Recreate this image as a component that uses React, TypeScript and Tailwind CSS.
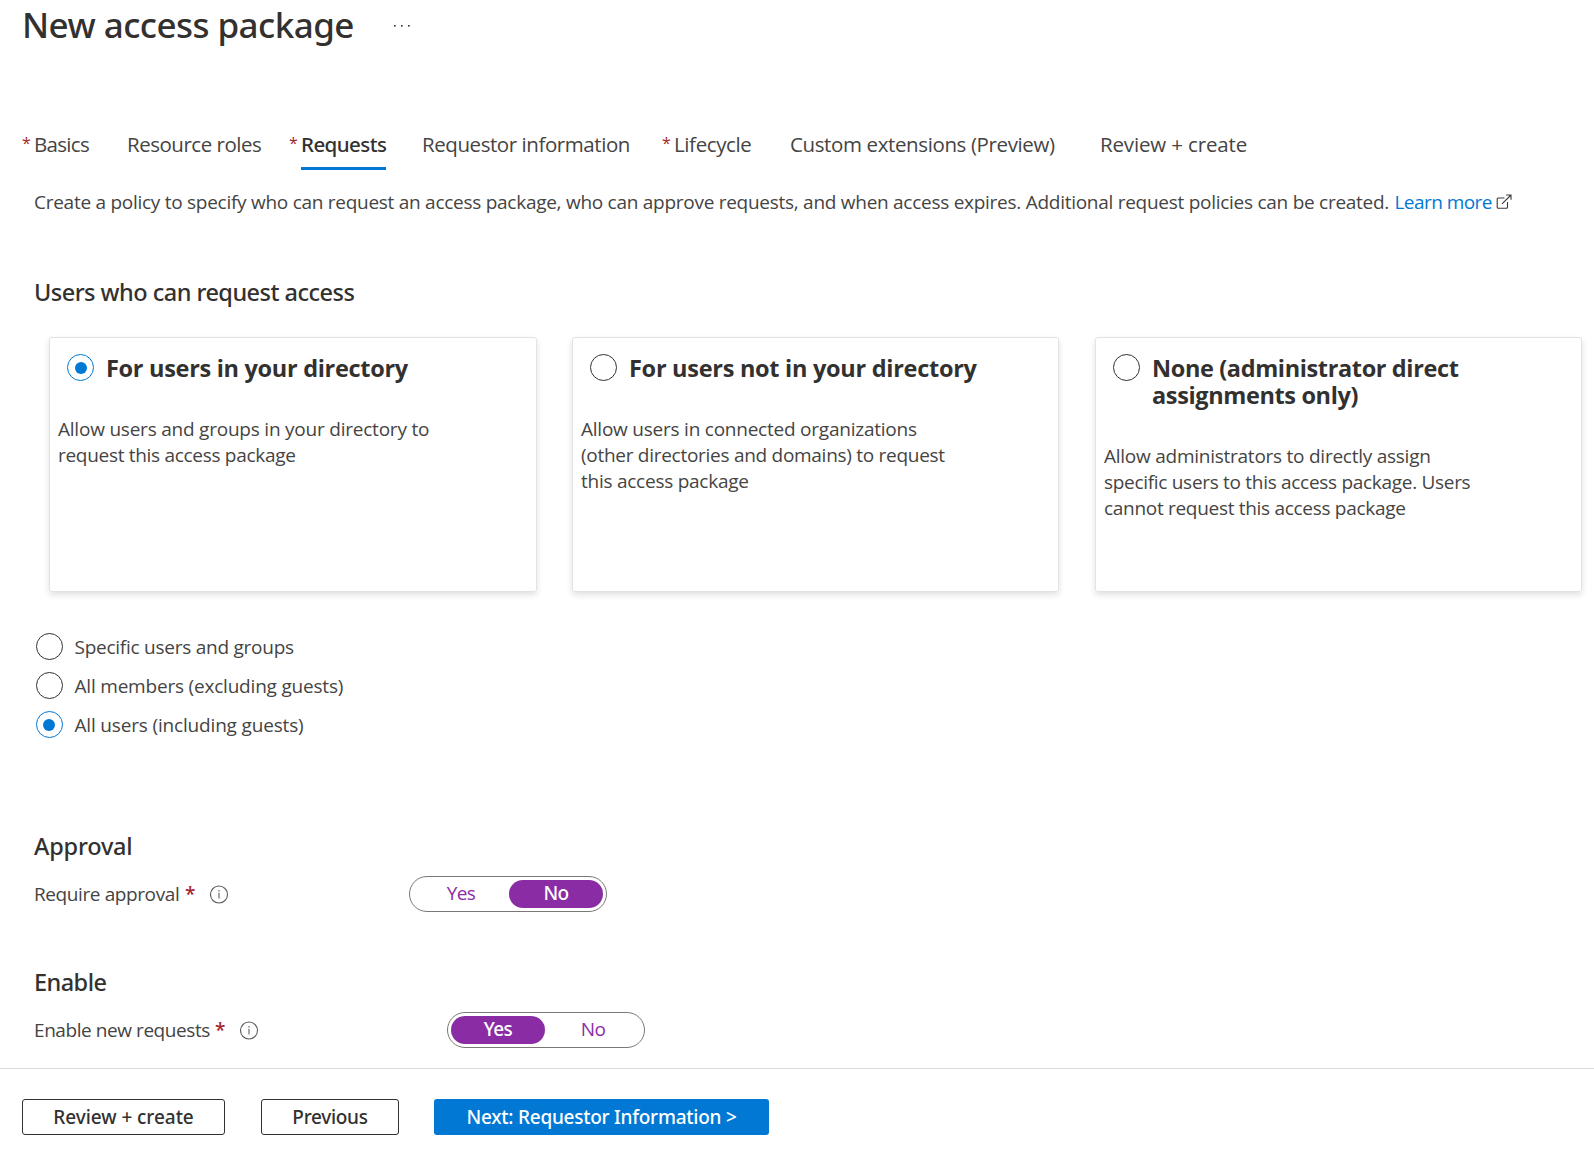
import { useState } from "react";

type Tab = { label: string; required?: boolean; active?: boolean; box: string; text: string };

const tabs: Tab[] = [
  { label: "Basics", required: true, box: "w-[105px]", text: "tracking-[-0.7px]" },
  { label: "Resource roles", box: "w-[162px]", text: "tracking-[-0.48px]" },
  { label: "Requests", required: true, active: true, box: "w-[133px]", text: "tracking-[-0.55px]" },
  { label: "Requestor information", box: "w-[240px]", text: "tracking-[-0.43px]" },
  { label: "Lifecycle", required: true, box: "w-[128px]", text: "tracking-[-0.38px]" },
  { label: "Custom extensions (Preview)", box: "w-[310px]", text: "tracking-[-0.38px]" },
  { label: "Review + create", box: "w-[160px]", text: "tracking-[-0.15px]" },
];

const cards = [
  {
    title: ["For users in your directory"],
    titleClass: "tracking-[-0.3px]",
    box: "w-[488px]",
    lines: [
      { t: "Allow users and groups in your directory to", c: "tracking-[-0.22px]" },
      { t: "request this access package", c: "tracking-[-0.3px]" },
    ],
  },
  {
    title: ["For users not in your directory"],
    titleClass: "tracking-[-0.28px]",
    box: "ml-[35px] w-[487px]",
    lines: [
      { t: "Allow users in connected organizations", c: "tracking-[-0.23px]" },
      { t: "(other directories and domains) to request", c: "tracking-[-0.28px]" },
      { t: "this access package", c: "tracking-[-0.25px]" },
    ],
  },
  {
    title: ["None (administrator direct", "assignments only)"],
    titleClass: "tracking-[-0.37px]",
    box: "ml-9 w-[487px]",
    lines: [
      { t: "Allow administrators to directly assign", c: "tracking-[-0.25px]" },
      { t: "specific users to this access package. Users", c: "tracking-[-0.3px]" },
      { t: "cannot request this access package", c: "tracking-[-0.3px]" },
    ],
  },
];

const scopes = [
  { t: "Specific users and groups", c: "tracking-[-0.25px]" },
  { t: "All members (excluding guests)", c: "tracking-[-0.2px]" },
  { t: "All users (including guests)", c: "tracking-[-0.17px]" },
];

type RadioProps = { checked: boolean; onSelect: () => void; label: string; dot: string };

function Radio({ checked, onSelect, label, dot }: RadioProps) {
  return (
    <button
      type="button"
      role="radio"
      aria-checked={checked}
      aria-label={label}
      onClick={onSelect}
      className={
        checked
          ? "flex size-[27px] shrink-0 items-center justify-center rounded-full border border-[#0078d4]"
          : "flex size-[27px] shrink-0 items-center justify-center rounded-full border border-[#323130]"
      }
    >
      {checked && <span className={`size-3 rounded-full bg-[#0078d4] ${dot}`} />}
    </button>
  );
}

function InfoIcon() {
  return (
    <svg width="19" height="19" viewBox="0 0 19 19" fill="none" stroke="#605e5c" strokeWidth="1.1">
      <circle cx="9" cy="9.5" r="8.5" />
      <path d="M9 7.8v5.8M9 5v1.4" />
    </svg>
  );
}

function Toggle({ value, onChange }: { value: string; onChange: (v: string) => void }) {
  return (
    <div className="flex h-9 w-[198px] rounded-full border border-[#7a7876] p-[3px]">
      {["Yes", "No"].map((o) => (
        <button
          key={o}
          type="button"
          onClick={() => onChange(o)}
          className={
            value === o
              ? "h-7 w-[94px] rounded-full bg-[#8a2da5] pb-px font-['Noto_Sans'] text-[19px] leading-[25px] font-medium tracking-[-0.6px] text-white"
              : "h-7 flex-1 rounded-full pb-px text-[19px] leading-[25px] tracking-[-0.6px] text-[#8a2da5]"
          }
        >
          {o}
        </button>
      ))}
    </div>
  );
}

export default function App() {
  const [card, setCard] = useState(0);
  const [scope, setScope] = useState(2);
  const [approval, setApproval] = useState("No");
  const [enabled, setEnabled] = useState("Yes");

  return (
    <div className="flex h-[1149px] w-[1594px] flex-col overflow-hidden bg-white font-['Open_Sans',sans-serif] text-[19px] text-[#454443]">
      <header className="flex h-12 items-center pl-[22px]">
        <h1 className="w-[371px] pt-0.5 font-['Noto_Sans'] text-[35px] leading-12 font-medium tracking-[-0.55px] whitespace-nowrap text-[#323130]">
          New access package
        </h1>
        <svg width="18" height="4" viewBox="0 0 18 4" fill="#323130" className="mt-[3px]">
          <rect x="1" y="1" width="1.6" height="1.6" />
          <rect x="8" y="1" width="1.6" height="1.6" />
          <rect x="15" y="1" width="1.6" height="1.6" />
        </svg>
      </header>

      <nav className="mt-20 flex h-[42px] pl-[22px] text-[20.5px] leading-8 whitespace-nowrap">
        {tabs.map((t) => (
          <div key={t.label} className={`flex ${t.box}`}>
            {t.required && <span className="w-3 text-[16px] leading-[30px] text-[#a4262c]">*</span>}
            <div
              className={
                t.active
                  ? "h-[42px] w-[85px] border-b-3 border-[#0078d4] font-['Noto_Sans'] font-medium text-[#323130]"
                  : ""
              }
            >
              <span className={t.text}>{t.label}</span>
            </div>
          </div>
        ))}
      </nav>

      <p className="mt-[18px] flex h-7 items-center pl-[34px] leading-7 whitespace-nowrap">
        <span className="w-[1360.5px] tracking-[-0.27px]">
          Create a policy to specify who can request an access package, who can approve requests, and when access
          expires. Additional request policies can be created.
        </span>
        <a className="w-[101.5px] tracking-[-0.55px] text-[#0078d4]">Learn more</a>
        <svg width="16" height="16" viewBox="0 0 16 16" fill="none" stroke="#3b3a39" strokeWidth="1.1">
          <path d="M8.5 4H2.2a1 1 0 0 0-1 1v8.3a1 1 0 0 0 1 1h8.3a1 1 0 0 0 1-1V8" />
          <path d="M6 9.8 15 1M10.2 1H15v4.8" />
        </svg>
      </p>

      <h2 className="mt-15 pl-[34px] font-['Noto_Sans'] text-[23.5px] leading-8 font-medium tracking-[-0.52px] text-[#323130]">
        Users who can request access
      </h2>

      <div className="mt-[29px] flex pl-[49px]">
        {cards.map((c, i) => (
          <section
            key={c.title[0]}
            className={`h-[255px] shrink-0 rounded-[3px] border border-[#e3e2e1] pt-4 pl-2 whitespace-nowrap shadow-[0_3px_6px_rgba(0,0,0,0.12)] ${c.box}`}
          >
            <div className="flex pl-[9px]">
              <Radio checked={card === i} onSelect={() => setCard(i)} label={c.title.join(" ")} dot="ml-px" />
              <h3 className={`pt-px pl-3 text-[23.5px] leading-[27px] font-bold text-[#323130] ${c.titleClass}`}>
                {c.title.map((l) => (
                  <span key={l} className="block">
                    {l}
                  </span>
                ))}
              </h3>
            </div>
            <p className="mt-[34px] leading-[26px]">
              {c.lines.map((l) => (
                <span key={l.t} className={`block ${l.c}`}>
                  {l.t}
                </span>
              ))}
            </p>
          </section>
        ))}
      </div>

      <div role="radiogroup" className="mt-[35px] pl-9">
        {scopes.map((s, i) => (
          <div key={s.t} className="flex h-[39px] items-center gap-[11.5px]">
            <Radio checked={scope === i} onSelect={() => setScope(i)} label={s.t} dot="mr-px" />
            <span className={`pt-0.5 ${s.c}`}>{s.t}</span>
          </div>
        ))}
      </div>

      <h2 className="mt-[86px] pl-[34px] font-['Noto_Sans'] text-[23.5px] leading-8 font-medium tracking-[-0.2px] text-[#323130]">
        Approval
      </h2>
      <div className="mt-[14px] flex h-9 items-center pl-[34px]">
        <div className="flex w-[375px] items-center">
          <span className="w-[151px] tracking-[-0.4px]">Require approval</span>
          <span className="w-[25px] text-[19px] font-semibold text-[#a4262c]">*</span>
          <InfoIcon />
        </div>
        <Toggle value={approval} onChange={setApproval} />
      </div>

      <h2 className="mt-[54px] pl-[34px] font-['Noto_Sans'] text-[23.5px] leading-8 font-medium tracking-[-0.55px] text-[#323130]">
        Enable
      </h2>
      <div className="mt-[14px] flex h-9 items-center pl-[34px]">
        <div className="flex w-[413px] items-center">
          <span className="w-[181px] tracking-[-0.43px]">Enable new requests</span>
          <span className="w-[25px] text-[19px] font-semibold text-[#a4262c]">*</span>
          <InfoIcon />
        </div>
        <Toggle value={enabled} onChange={setEnabled} />
      </div>

      <footer className="mt-5 flex border-t border-[#dcdbda] pt-[30px] pl-[22px] font-['Noto_Sans'] font-medium text-[#323130]">
        <button type="button" className="h-9 w-[203px] rounded-[3px] border border-[#323130] tracking-[-0.05px]">
          Review + create
        </button>
        <button type="button" className="ml-9 h-9 w-[138px] rounded-[3px] border border-[#323130] tracking-[-0.3px]">
          Previous
        </button>
        <button type="button" className="ml-[35px] h-9 w-[335px] rounded-[3px] bg-[#0078d4] tracking-[-0.25px] text-white">
          Next: Requestor Information &gt;
        </button>
      </footer>
    </div>
  );
}
